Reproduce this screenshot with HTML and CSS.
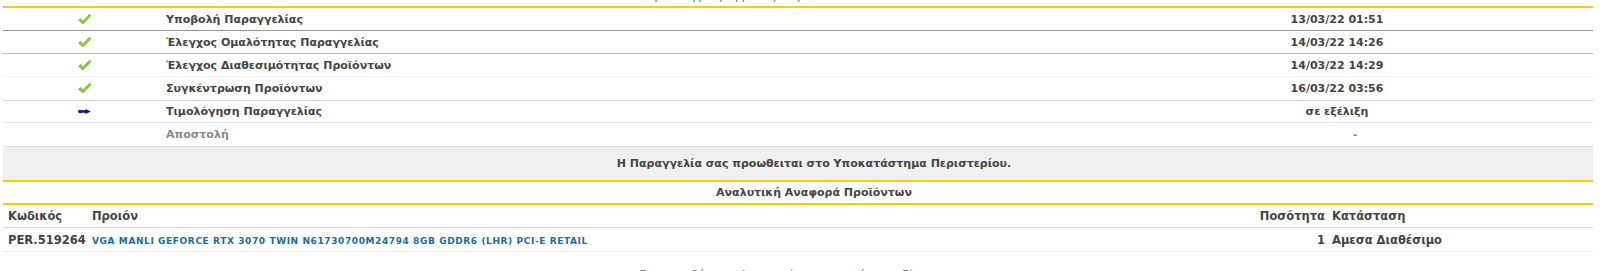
FILE: index.html
```html
<!DOCTYPE html>
<html lang="el">
<head>
<meta charset="utf-8">
<title>Πορεία Παραγγελίας</title>
<link rel="stylesheet" href="styles.css">
</head>
<body>
<div class="page">
  <div class="top-note">Η πορεία της παραγγελίας σας</div>
  <div class="status">
    <div class="srow r1">
      <div class="ico"><svg width="15" height="13" viewBox="0 0 15 13"><path d="M1 7.2 L3.4 5 L6 7.6 L12.4 0.8 L14.4 2.8 L6 11.6 Z" fill="#8cc43c"/></svg></div>
      <div class="step">Υποβολή Παραγγελίας</div>
      <div class="when">13/03/22 01:51</div>
    </div>
    <div class="srow r2">
      <div class="ico"><svg width="15" height="13" viewBox="0 0 15 13"><path d="M1 7.2 L3.4 5 L6 7.6 L12.4 0.8 L14.4 2.8 L6 11.6 Z" fill="#8cc43c"/></svg></div>
      <div class="step">Έλεγχος Ομαλότητας Παραγγελίας</div>
      <div class="when">14/03/22 14:26</div>
    </div>
    <div class="srow r3">
      <div class="ico"><svg width="15" height="13" viewBox="0 0 15 13"><path d="M1 7.2 L3.4 5 L6 7.6 L12.4 0.8 L14.4 2.8 L6 11.6 Z" fill="#8cc43c"/></svg></div>
      <div class="step">Έλεγχος Διαθεσιμότητας Προϊόντων</div>
      <div class="when">14/03/22 14:29</div>
    </div>
    <div class="srow r4">
      <div class="ico"><svg width="15" height="13" viewBox="0 0 15 13"><path d="M1 7.2 L3.4 5 L6 7.6 L12.4 0.8 L14.4 2.8 L6 11.6 Z" fill="#8cc43c"/></svg></div>
      <div class="step">Συγκέντρωση Προϊόντων</div>
      <div class="when">16/03/22 03:56</div>
    </div>
    <div class="srow r5">
      <div class="ico"><svg width="13" height="5" viewBox="0 0 13 5"><ellipse cx="2" cy="2.5" rx="2" ry="1.8" fill="#14148a"/><rect x="2.5" y="1.2" width="6" height="2.6" fill="#14148a"/><path d="M7.5 0 L12.8 2.5 L7.5 5 Z" fill="#14148a"/></svg></div>
      <div class="step">Τιμολόγηση Παραγγελίας</div>
      <div class="when">σε εξέλιξη</div>
    </div>
    <div class="srow r6">
      <div class="ico"></div>
      <div class="step pending">Αποστολή</div>
      <div class="when dash">-</div>
    </div>
  </div>
  <div class="notice">Η Παραγγελία σας προωθειται στο Υποκατάστημα Περιστερίου.</div>
  <div class="section-title">Αναλυτική Αναφορά Προϊόντων</div>
  <div class="products">
    <div class="prow head">
      <div class="code">Κωδικός</div>
      <div class="name">Προιόν</div>
      <div class="qty">Ποσότητα</div>
      <div class="state">Κατάσταση</div>
    </div>
    <div class="prow item">
      <div class="code">PER.519264</div>
      <div class="name"><span class="plink">VGA MANLI GEFORCE RTX 3070 TWIN N61730700M24794 8GB GDDR6 (LHR) PCI-E RETAIL</span></div>
      <div class="qty">1</div>
      <div class="state">Αμεσα Διαθέσιμο</div>
    </div>
  </div>
  <div class="bottom-note">Για οποιαδήποτε πληροφορία επικοινωνήστε μαζί μας</div>
</div>
</body>
</html>
```
FILE: styles.css
```css
html, body {
  margin: 0;
  padding: 0;
  background: #ffffff;
}
body {
  font-family: "DejaVu Sans", sans-serif;
  font-size: 11px;
  color: #444444;
  overflow: hidden;
  height: 271px;
}
.page {
  margin: 0 7px 0 3px;
}
.top-note {
  box-sizing: border-box;
  height: 6px;
  padding: 0 166px 3px 0;
  overflow: hidden;
  line-height: 12px;
  color: #666;
  font-size: 11px;
  display: flex;
  align-items: flex-end;
  justify-content: center;
}
.status {
  border-top: 2px solid #ffcc00;
}
.srow {
  display: flex;
  align-items: center;
  height: 22px;
  border-bottom: 1px solid #dddddd;
  font-weight: bold;
}
.srow.r1 { border-bottom-color: #959595; }
.srow.r2 { border-bottom-color: #c0c0c0; }
.srow.r3 { border-bottom-color: #f2f2f2; }
.srow.r4 { border-bottom-color: #d5d5d5; height: 23px; }
.srow.r5 { border-bottom-color: #e6e6e6; height: 21px; }
.srow.r6 { border-bottom-color: #dedede; height: 23px; }
.ico {
  width: 163px;
  display: flex;
  justify-content: center;
  align-items: center;
}
.step {
  flex: 1;
}
.step.pending { color: #888888; }
.when {
  width: 512px;
  text-align: center;
}
.when.dash {
  padding-left: 36px;
  box-sizing: border-box;
  color: #888888;
}
.notice {
  background: #f0f0f0;
  height: 33px;
  display: flex;
  align-items: center;
  justify-content: center;
  padding-left: 32px;
  font-weight: bold;
  border-bottom: 2px solid #ffcc00;
}
.section-title {
  height: 21px;
  display: flex;
  align-items: center;
  justify-content: center;
  padding-left: 32px;
  font-weight: bold;
  border-bottom: 2px solid #ffcc00;
}
.prow {
  display: flex;
  align-items: center;
  height: 22px;
  border-bottom: 1px solid #dcdcdc;
  font-weight: bold;
  font-size: 11.5px;
}
.prow.item {
  height: 23px;
  border-bottom-color: #ebebeb;
}
.code {
  width: 84px;
  padding-left: 5px;
}
.name {
  flex: 1;
}
.plink {
  color: #1b6aa5;
  font-size: 9px;
  letter-spacing: 0.6px;
}
.qty {
  width: 68px;
  text-align: right;
  padding-right: 7px;
}
.state {
  width: 261px;
}
.bottom-note {
  margin-top: 16px;
  text-align: center;
  color: #777;
  font-size: 11px;
  padding-right: 20px;
}
```
